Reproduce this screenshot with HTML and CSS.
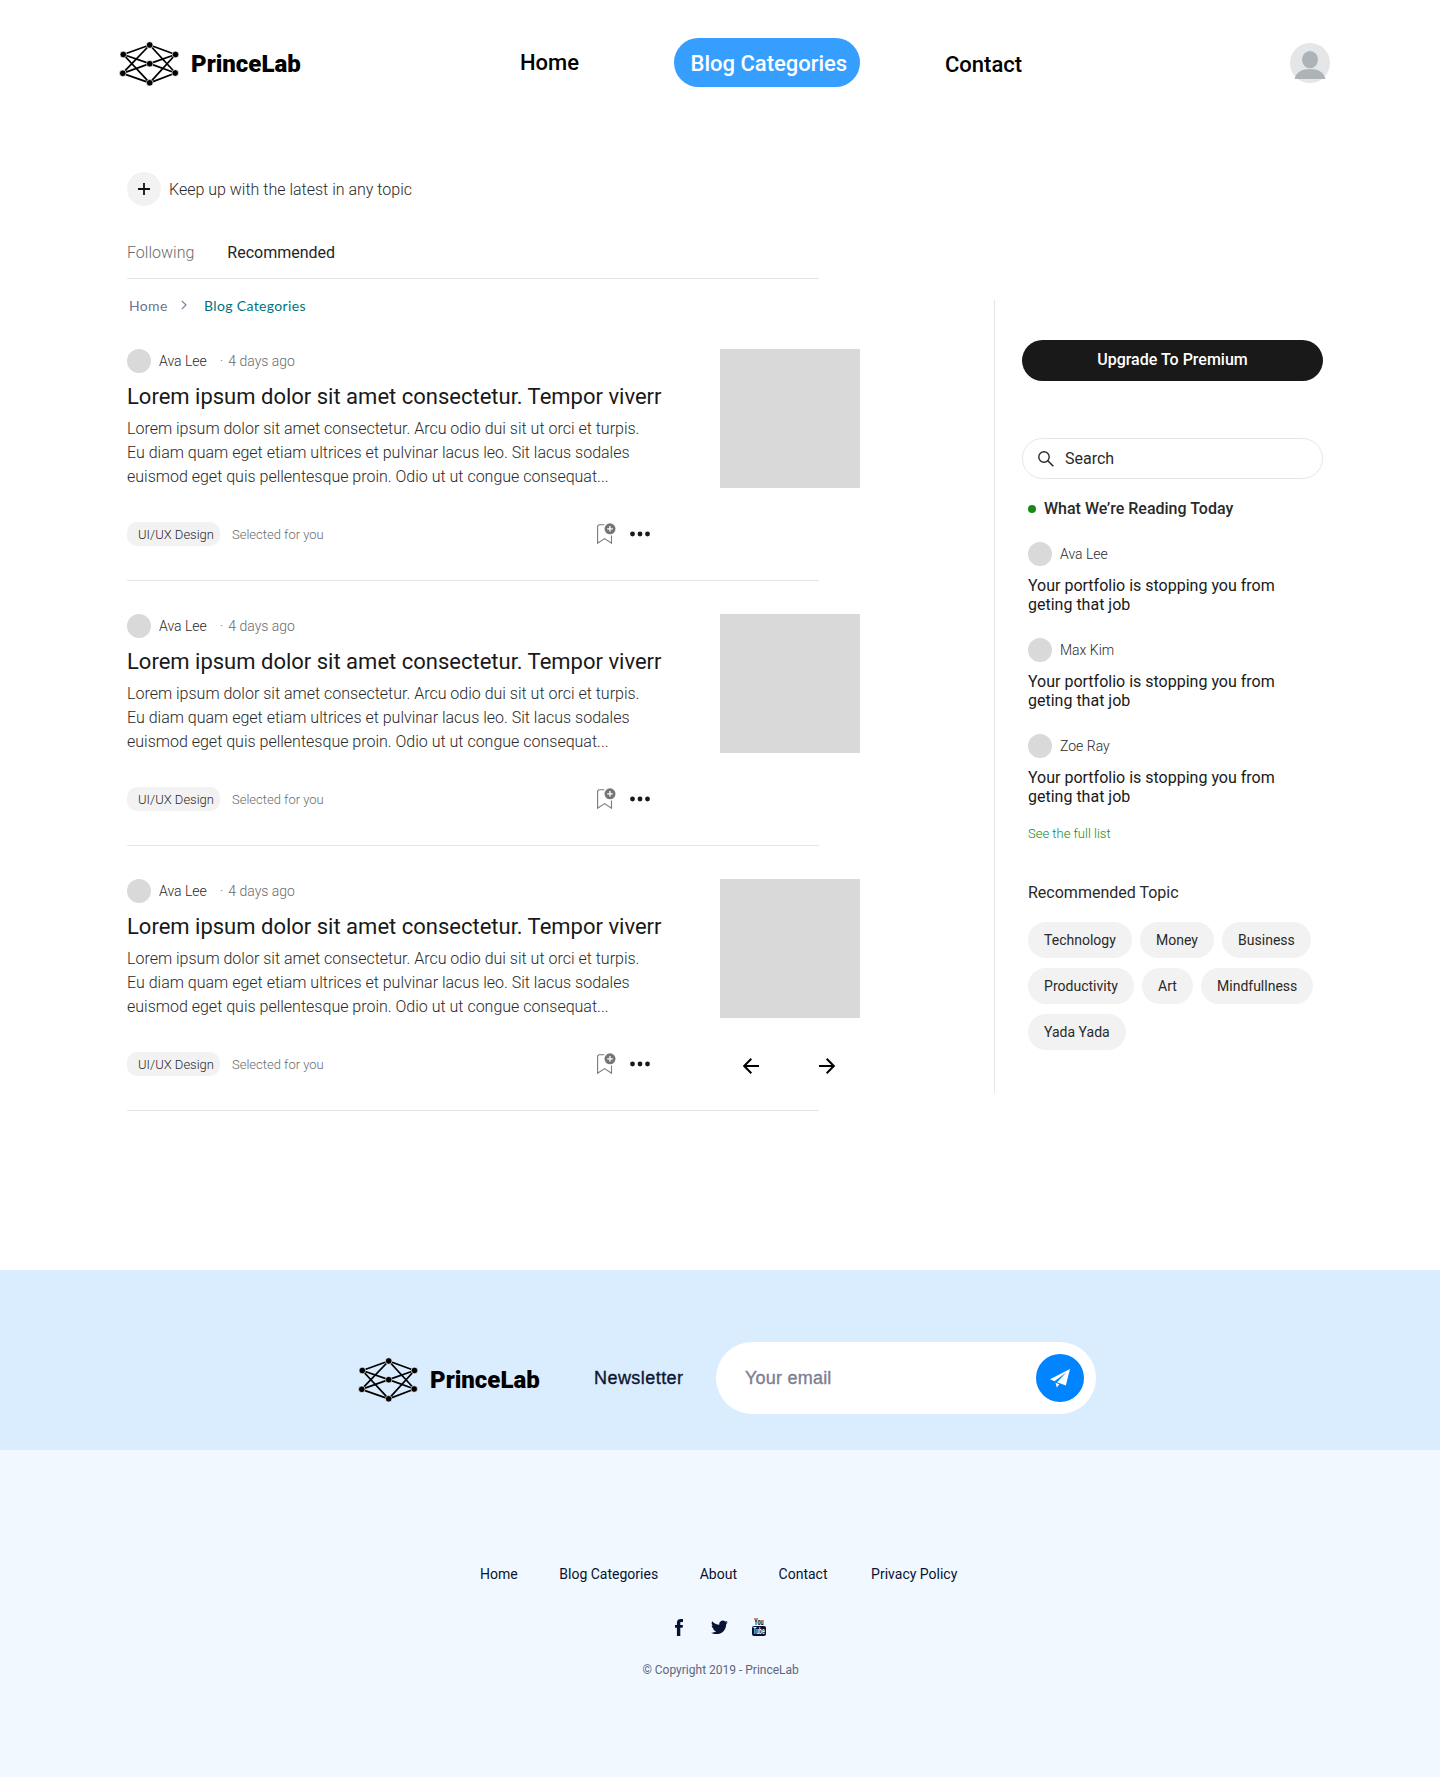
FILE: index.html
```html
<!DOCTYPE html>
<html lang="en">
<head>
<meta charset="utf-8">
<title>PrinceLab – Blog Categories</title>
<link rel="stylesheet" href="styles.css">
</head>
<body>
<svg class="sprite" width="0" height="0" aria-hidden="true">
  <symbol id="mark" viewBox="0 0 60 46">
    <path d="M30.7 4 4.3 13.5M30.7 4 56.5 13.5M30.7 4 3.5 32.3M30.7 4 56.5 32M30.7 22.7 4.3 13.5M30.7 22.7 56.5 13.5M30.7 22.7 3.5 32.3M30.7 22.7 56.5 32M30.7 41.8 4.3 13.5M30.7 41.8 56.5 13.5M30.7 41.8 3.5 32.3M30.7 41.8 56.5 32" fill="none" stroke="#000" stroke-width="1.8"/>
    <g fill="#000" stroke="#fff" stroke-opacity=".75" stroke-width=".9"><circle cx="30.7" cy="4" r="3.300"/><circle cx="4.3" cy="13.5" r="3.300"/><circle cx="56.5" cy="13.5" r="3.300"/><circle cx="30.7" cy="22.7" r="3.300"/><circle cx="3.800" cy="32.3" r="3.300"/><circle cx="56.200" cy="32" r="3.300"/><circle cx="30.7" cy="41.8" r="3.300"/></g>
  </symbol>
  <symbol id="bookmark" viewBox="0 0 20 22">
    <path d="M8.3 1.7H3.6Q1.6 1.7 1.6 3.8V20.2L8.6 15.6 15.5 20.2V12.6" fill="none" stroke="#7a7a7a" stroke-width="1.1"/>
    <circle cx="14" cy="5.8" r="5.5" fill="#757575"/>
    <path d="M14 3v5.6M11.2 5.8h5.6" stroke="#fff" stroke-width="1.3"/>
  </symbol>
  <symbol id="dots" viewBox="0 0 20 6">
    <circle cx="2.5" cy="3" r="2.4"/><circle cx="10" cy="3" r="2.4"/><circle cx="17.5" cy="3" r="2.4"/>
  </symbol>
</svg>

<header class="header">
  <a class="brand"><svg class="brand-mark"><use href="#mark"/></svg><span class="brand-name">PrinceLab</span></a>
  <nav class="nav">
    <a class="nav-link nav-home">Home</a>
    <a class="nav-link nav-active">Blog Categories</a>
    <a class="nav-link nav-contact">Contact</a>
  </nav>
  <svg class="user" viewBox="0 0 40 40"><circle cx="20" cy="20" r="20" fill="#e4e6e7"/><ellipse cx="20" cy="16.6" rx="8" ry="8.6" fill="#adb3b7"/><path d="M4.600 36C6 29 12 26 20 26s14 3 15.400 10z" fill="#adb3b7"/></svg>
</header>

<main class="main">
  <section class="feed">
    <div class="topic">
      <span class="plus"><svg width="12" height="12" viewBox="0 0 12 12"><path d="M6 0v12M0 6h12" stroke="#111" stroke-width="1.8"/></svg></span>
      <span class="topic-text">Keep up with the latest in any topic</span>
    </div>
    <div class="tabs"><span class="tab">Following</span><span class="tab tab-on">Recommended</span></div>
    <div class="crumbs"><span class="crumb">Home</span><svg class="crumb-sep" width="6" height="10" viewBox="0 0 6 10"><path d="M.8.8 5 5 .8 9.200" fill="none" stroke="#7b819c" stroke-width="1.200"/></svg><span class="crumb crumb-on">Blog Categories</span></div>

    <article class="post">
      <div class="post-body">
        <div class="author"><i class="dot-avatar"></i><span class="name">Ava Lee</span><span class="date">·<span class="ago">4 days ago</span></span></div>
        <h2 class="post-title">Lorem ipsum dolor sit amet consectetur. Tempor viverr</h2>
        <p class="post-text">Lorem ipsum dolor sit amet consectetur. Arcu odio dui sit ut orci et turpis.<br>Eu diam quam eget etiam ultrices et pulvinar lacus leo. Sit lacus sodales<br>euismod eget quis pellentesque proin. Odio ut ut congue consequat...</p>
        <div class="meta"><span class="tag">UI/UX Design</span><span class="why">Selected for you</span><svg class="save"><use href="#bookmark"/></svg><svg class="more"><use href="#dots"/></svg></div>
      </div>
      <div class="post-side"><div class="thumb"></div></div>
    </article>
    <article class="post">
      <div class="post-body">
        <div class="author"><i class="dot-avatar"></i><span class="name">Ava Lee</span><span class="date">·<span class="ago">4 days ago</span></span></div>
        <h2 class="post-title">Lorem ipsum dolor sit amet consectetur. Tempor viverr</h2>
        <p class="post-text">Lorem ipsum dolor sit amet consectetur. Arcu odio dui sit ut orci et turpis.<br>Eu diam quam eget etiam ultrices et pulvinar lacus leo. Sit lacus sodales<br>euismod eget quis pellentesque proin. Odio ut ut congue consequat...</p>
        <div class="meta"><span class="tag">UI/UX Design</span><span class="why">Selected for you</span><svg class="save"><use href="#bookmark"/></svg><svg class="more"><use href="#dots"/></svg></div>
      </div>
      <div class="post-side"><div class="thumb"></div></div>
    </article>
    <article class="post">
      <div class="post-body">
        <div class="author"><i class="dot-avatar"></i><span class="name">Ava Lee</span><span class="date">·<span class="ago">4 days ago</span></span></div>
        <h2 class="post-title">Lorem ipsum dolor sit amet consectetur. Tempor viverr</h2>
        <p class="post-text">Lorem ipsum dolor sit amet consectetur. Arcu odio dui sit ut orci et turpis.<br>Eu diam quam eget etiam ultrices et pulvinar lacus leo. Sit lacus sodales<br>euismod eget quis pellentesque proin. Odio ut ut congue consequat...</p>
        <div class="meta"><span class="tag">UI/UX Design</span><span class="why">Selected for you</span><svg class="save"><use href="#bookmark"/></svg><svg class="more"><use href="#dots"/></svg></div>
      </div>
      <div class="post-side"><div class="thumb"></div>
        <div class="pager">
          <svg width="16" height="16" viewBox="0 0 16 16"><path d="M16 8H1.300M8.300 .7 1.200 8l7.100 7.300" fill="none" stroke="#000" stroke-width="2"/></svg>
          <svg width="16" height="16" viewBox="0 0 16 16"><path d="M0 8h14.700M7.700 .7 14.800 8l-7.100 7.300" fill="none" stroke="#000" stroke-width="2"/></svg>
        </div>
      </div>
    </article>
  </section>

  <aside class="side">
    <a class="premium">Upgrade To Premium</a>
    <div class="search"><svg width="16" height="16" viewBox="0 0 16 16"><circle cx="6" cy="6" r="5.200" fill="none" stroke="#292929" stroke-width="1.400"/><path d="m9.800 9.800 5.500 5.500" stroke="#292929" stroke-width="1.600"/></svg><span>Search</span></div>
    <div class="reading">
      <h3 class="reading-head">What We’re Reading Today</h3>
      <div class="read"><div class="author"><i class="dot-avatar"></i><span class="name">Ava Lee</span></div><p class="read-title">Your portfolio is stopping you from<br>geting that job</p></div>
      <div class="read"><div class="author"><i class="dot-avatar"></i><span class="name">Max Kim</span></div><p class="read-title">Your portfolio is stopping you from<br>geting that job</p></div>
      <div class="read"><div class="author"><i class="dot-avatar"></i><span class="name">Zoe Ray</span></div><p class="read-title">Your portfolio is stopping you from<br>geting that job</p></div>
      <a class="full-list">See the full list</a>
      <h3 class="topics-head">Recommended Topic</h3>
      <div class="chips"><span class="chip">Technology</span><span class="chip">Money</span><span class="chip">Business</span><span class="chip">Productivity</span><span class="chip">Art</span><span class="chip">Mindfullness</span><span class="chip">Yada Yada</span></div>
    </div>
  </aside>
</main>

<section class="newsletter">
  <a class="brand"><svg class="brand-mark"><use href="#mark"/></svg><span class="brand-name">PrinceLab</span></a>
  <span class="news-label">Newsletter</span>
  <div class="email"><span class="email-text">Your email</span>
    <span class="send"><svg width="20" height="19" viewBox="0 0 20 19"><path d="M20 0 0 10.200 4.500 12.200 16.500 3.200 7 13.300 15.800 16.600zM5.500 13.800 9.400 15.300 6.800 18.600z" fill="#fff"/></svg></span>
  </div>
</section>

<footer class="footer">
  <nav class="foot-nav"><a>Home</a><a>Blog Categories</a><a>About</a><a>Contact</a><a class="foot-last">Privacy Policy</a></nav>
  <div class="social">
    <svg width="8" height="17" viewBox="0 0 8 17"><path d="M8 .1V2.900H6.400C5.500 2.900 5.300 3.400 5.300 4V6H8L7.600 8.800H5.300V17H1.900V8.800H0V6H1.900V3.800C1.900 1.500 3.300 0 5.500 0z" fill="#081331"/></svg>
    <svg class="tw" width="17" height="14" viewBox="0 1.500 24 20"><path d="M23.950 4.570a10 10 0 0 1-2.820.770 4.960 4.960 0 0 0 2.160-2.720c-.950.550-2 .950-3.120 1.180a4.920 4.920 0 0 0-8.380 4.480C7.690 8.090 4.070 6.130 1.640 3.160a4.920 4.920 0 0 0 1.520 6.570 4.900 4.900 0 0 1-2.230-.610v.060a4.920 4.920 0 0 0 3.950 4.830 5 5 0 0 1-2.210.080 4.940 4.940 0 0 0 4.600 3.420A9.870 9.870 0 0 1 0 19.540a13.990 13.990 0 0 0 7.550 2.210c9.050 0 14-7.500 14-13.980 0-.210 0-.420-.020-.630a9.940 9.940 0 0 0 2.420-2.570z" fill="#081331"/></svg>
    <svg class="yt" width="14" height="17" viewBox="0 0 14 17"><rect y="7" width="14" height="10" rx="2" fill="#081331"/><text x="2.200" y="6.400" textLength="9.400" lengthAdjust="spacingAndGlyphs" font-size="9" fill="#081331" class="yt-text">You</text><text x="1.300" y="15.200" textLength="11.400" lengthAdjust="spacingAndGlyphs" font-size="9" fill="#f0f7ff" class="yt-text">Tube</text></svg>
  </div>
  <p class="copy">© Copyright 2019 - PrinceLab</p>
</footer>
</body>
</html>
```
FILE: styles.css
```css
* { box-sizing: border-box; }
body { margin: 0; background: #fff; color: #191919; font-family: Roboto, sans-serif; font-size: 16px; }
h2, h3, p { margin: 0; font-weight: 400; }
.sprite { position: absolute; }
svg { display: block; flex: none; }

.header { display: flex; height: 124px; padding-left: 119px; }
.brand { display: flex; align-items: flex-start; width: 190px; }
.brand-mark { width: 60px; height: 46px; }
.brand-name { margin: 9px 0 0 12px; font-size: 24px; font-weight: 900; line-height: 28px; color: #000; }
.header .brand { padding-top: 41px; }
.nav { display: flex; align-items: flex-start; width: 981px; }
.nav-link { font-size: 22px; font-weight: 500; line-height: 26px; color: #000; white-space: nowrap; }
.nav-home { width: 60px; margin: 50px 0 0 211px; }
.nav-active { width: 186px; height: 49px; margin: 38px 0 0 94px; padding: 13px 0 0 16.5px; border-radius: 24.5px; background: #369eff; color: #fff; }
.nav-contact { margin: 52px 0 0 85px; }
.user { width: 40px; height: 40px; margin-top: 43px; }

.main { display: flex; height: 1146px; }
.feed { width: 733px; margin-left: 127px; padding-top: 48px; }
.topic { display: flex; align-items: center; gap: 8px; height: 34px; }
.plus { display: flex; align-items: center; justify-content: center; width: 34px; height: 34px; border-radius: 50%; background: #f2f2f2; }
.topic-text { font-weight: 300; color: #292929; }
.tabs { display: flex; gap: 33px; width: 692px; height: 73px; padding-top: 37px; border-bottom: 1px solid #e6e6e6; line-height: 19px; }
.tab { font-weight: 300; color: #6b6b6b; }
.tab-on { font-weight: 400; color: #242424; }
.crumbs { display: flex; align-items: center; height: 54px; padding: 0 0 2px 2px; font-family: Lato, sans-serif; font-size: 14px; letter-spacing: .35px; color: #6b7294; }
.crumb { width: 39px; white-space: nowrap; }
.crumb-sep { margin: 0 17px 0 13px; }
.crumb-on { color: #00737a; }

.post { position: relative; display: flex; height: 232px; margin-bottom: 33px; }
.post::after { content: ""; position: absolute; left: 0; bottom: 0; width: 692px; height: 1px; background: #e6e6e6; }
.crumbs + .post { margin-top: 16px; }
.post-body { width: 593px; }
.author { display: flex; align-items: center; height: 24px; font-size: 14px; font-weight: 300; }
.dot-avatar { width: 24px; height: 24px; margin-right: 8px; border-radius: 50%; background: #d9d9d9; }
.name { color: #292929; }
.date { margin-left: 13px; color: #6b6b6b; }
.ago { margin-left: 5px; }
.post-title { margin-top: 10px; font-size: 22px; line-height: 28px; }
.post-text { margin-top: 6px; font-weight: 300; line-height: 24px; color: #292929; white-space: nowrap; }
.meta { display: flex; align-items: center; height: 24px; margin-top: 33px; font-size: 13px; font-weight: 300; }
.tag { width: 93px; height: 24px; padding-left: 11px; border-radius: 10px; background: #f2f2f2; line-height: 25px; color: #292929; }
.why { width: 240px; margin-left: 12px; color: #6b6b6b; }
.save { width: 20px; height: 22px; margin-left: 124px; }
.more { width: 20px; height: 6px; margin-left: 14px; fill: #191919; }
.thumb { width: 140px; height: 139px; background: #d9d9d9; }
.pager { display: flex; justify-content: space-between; margin-top: 40px; padding: 0 25px 0 23px; }

.side { width: 330px; height: 793px; margin: 176px 0 0 134px; padding: 40px 0 0 27px; border-left: 1px solid #e6e6e6; }
.premium { display: block; width: 301px; height: 41px; border-radius: 20.5px; background: #191919; color: #fff; font-weight: 500; line-height: 39px; text-align: center; }
.search { display: flex; align-items: center; gap: 11px; width: 301px; height: 41px; margin-top: 57px; padding-left: 15px; border: 1px solid #e6e6e6; border-radius: 20.5px; color: #292929; }
.reading { padding-left: 6px; }
.reading-head { display: flex; align-items: center; gap: 8px; height: 19px; margin-top: 20px; font-size: 16px; font-weight: 500; color: #292929; }
.reading-head::before { content: ""; width: 8px; height: 8px; border-radius: 50%; background: #1a8917; }
.read { height: 96px; }
.reading-head + .read { margin-top: 24px; }
.read-title { margin-top: 10px; line-height: 19px; white-space: nowrap; }
.full-list { display: block; height: 16px; margin-top: -4px; font-size: 13px; font-weight: 300; line-height: 16px; color: #1a8917; }
.topics-head { margin-top: 41px; font-size: 16px; line-height: 20px; color: #292929; }
.chips { display: flex; flex-wrap: wrap; gap: 10px 8px; margin-top: 19px; }
.chip { height: 36px; padding: 0 16.1px; border-radius: 18px; background: #f2f2f2; font-size: 14px; line-height: 36px; color: #292929; }

.newsletter { display: flex; align-items: flex-start; height: 180px; padding-left: 358px; background: #daedff; }
.newsletter .brand { width: 236px; padding-top: 87px; }
.news-label { width: 122px; margin-top: 98px; font-family: "Liberation Sans", sans-serif; font-size: 18px; line-height: 20px; letter-spacing: .45px; color: #0f1530; -webkit-text-stroke: .35px #0f1530; }
.email { display: flex; align-items: center; justify-content: space-between; width: 380px; height: 72px; margin-top: 72px; padding: 0 12px 0 29px; border-radius: 36px; background: #fff; }
.email-text { font-family: "Liberation Sans", sans-serif; font-size: 18px; letter-spacing: .22px; color: #7b8092; -webkit-text-stroke: .35px #7b8092; }
.send { display: flex; align-items: center; justify-content: center; width: 48px; height: 48px; border-radius: 50%; background: #0084ff; }

.footer { height: 327px; padding-top: 114px; background: #f1f8ff; color: #081331; }
.foot-nav { display: flex; gap: 41.6px; padding-left: 480px; font-size: 14px; line-height: 20px; }
.foot-last { margin-left: 2px; }
.social { display: flex; height: 17px; margin-top: 35px; padding-left: 675px; }
.tw { margin: 1px 0 0 27.5px; }
.yt { margin-left: 24.5px; overflow: visible; }
.yt-text { font-family: Roboto, sans-serif; font-weight: 700; }
.copy { margin-top: 25px; padding-left: 642.4px; font-size: 12px; line-height: 18px; color: #5f667c; }
```
